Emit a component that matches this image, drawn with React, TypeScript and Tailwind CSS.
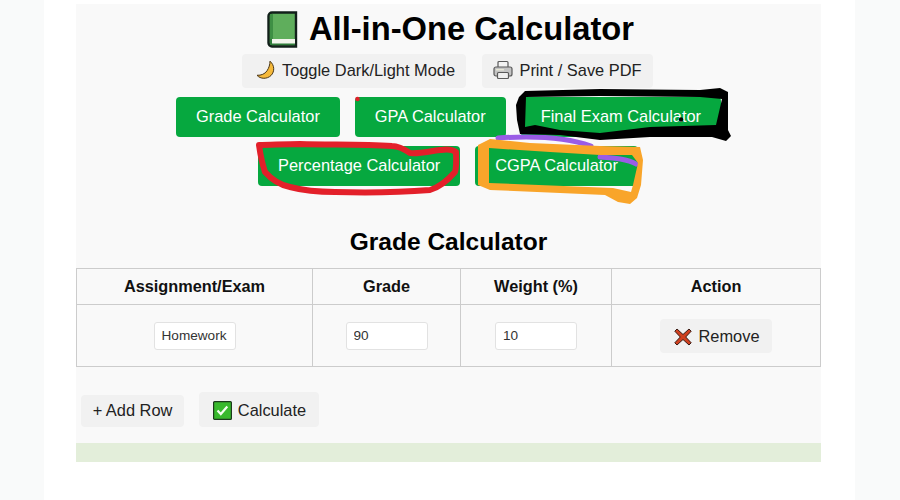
const font = { fontFamily: '"Liberation Sans", Arial, sans-serif' };

function Book() {
  return (
    <svg width="31" height="37" viewBox="0 0 31 37" className="shrink-0">
      <path d="M5 1.500H29V35.500H5A3.500 3.500 0 0 1 1.500 32V5A3.500 3.500 0 0 1 5 1.500z" fill="#5fae5c" stroke="#12201a" strokeWidth="2.400" />
      <rect x="3" y="3" width="3" height="25" fill="#3e8f44" />
      <rect x="3" y="28" width="25" height="6" fill="#2f7d3a" />
      <rect x="5" y="28" width="23" height="4.500" fill="#f2f5ec" />
    </svg>
  );
}

function Moon() {
  return (
    <svg width="20" height="20" viewBox="0 0 20 20" className="shrink-0">
      <path d="M14 1.200C18.500 5 19 11.500 15 15.500 11 19.300 4.500 19.200 1 15.300 5 15.500 9 14 11 10.800 13 7.800 14 4.500 14 1.200z" fill="#f5b93a" stroke="#4a3514" strokeWidth="1" />
    </svg>
  );
}

function Printer() {
  return (
    <svg width="20" height="20" viewBox="0 0 20 20" className="shrink-0">
      <path d="M5 8V2.500a1 1 0 0 1 1-1h8a1 1 0 0 1 1 1V8" fill="#f3f3f3" stroke="#5a5a5a" strokeWidth="1.200" />
      <rect x="1" y="7" width="18" height="9" rx="2" fill="#c4c4c4" stroke="#5a5a5a" strokeWidth="1.200" />
      <rect x="3" y="9" width="8" height="1.500" fill="#e6e6d6" />
      <rect x="4.500" y="12.500" width="11" height="6" rx="1" fill="#efefef" stroke="#5a5a5a" strokeWidth="1.200" />
    </svg>
  );
}

function Check() {
  return (
    <svg width="19" height="19" viewBox="0 0 19 19" className="shrink-0">
      <rect x="0.600" y="0.600" width="17.800" height="17.800" rx="1" fill="#38b92c" stroke="#1c3a1c" strokeWidth="1.200" />
      <path d="M4.500 9.500l3.300 3.500 6.500-7.500" fill="none" stroke="#f4fff0" strokeWidth="2.200" />
    </svg>
  );
}

function Cross() {
  return (
    <svg width="18" height="18" viewBox="0 0 18 18" className="shrink-0">
      <path d="M3 1l6 5.500L15 1l2.200 2.200-5.500 5.800 5.500 5.800L15 17l-6-5.500L3 17 .8 14.800 6.300 9 .8 3.200z" fill="#d0401f" stroke="#3a1a12" strokeWidth="1" />
    </svg>
  );
}

function Scribbles() {
  return (
    <svg width="900" height="500" viewBox="0 0 900 500" fill="none" strokeLinecap="round" strokeLinejoin="round" className="absolute left-0 top-0 pointer-events-none">
      <circle cx="357.500" cy="99" r="2.300" fill="#e0202a" />
      <path d="M498 138c30-2 65-2 93 8M600 157c14 1 28 2 36 7" stroke="#9a5ce6" strokeWidth="5" />
      <path fillRule="evenodd" fill="#000000" d="M519 97L525 91 600 89 700 90 720 88 728 92 728 130 731 136 726 141 712 137 650 137 600 140 560 135 520 134 517 120 516 105zM526 97L600 96 700 97 722 99 716 125 650 127 600 133 560 130 535 125 525 127z" />
      <circle cx="681" cy="119.500" r="2.200" fill="#000000" />
      <path d="M265 172C272 180 280 185 290 187 305 191 320 192 335 192 370 193 405 192 430 190 440 187 448 180 455 172 457 165 456 158 456 152 450 148 445 150 440 150 430 151 420 154 410 153 404 149 398 146 392 146 360 144 330 145 300 144 285 144 270 145 259 145 260 152 261 160 265 172z" stroke="#e3202a" strokeWidth="6" />
      <path fillRule="evenodd" fill="#f9a52a" d="M478 145L490 139 530 143 600 146 640 147 643 160 641 185 637 198 630 204 618 202 605 195 560 193 490 190 478 185zM489 148L550 152 600 155 632 155 638 163 633 185 631 192 613 188 489 183z" />
    </svg>
  );
}

export default function App() {
  return (
    <div style={font} className="relative flex h-[500px] w-[900px] overflow-hidden bg-[#f9fafa] text-[#111111]">
      <div className="w-[44px] shrink-0" />
      <div className="w-[811px] shrink-0 bg-white pl-[32px] pr-[34px] pt-[4px]">
        <div className="h-[458px] bg-[#f9f9f9]">
          <h1 className="flex h-[50px] items-center justify-center gap-[11px] pl-[4px] text-[32.7px] font-bold text-black">
            <Book />
            <span>All-in-One Calculator</span>
          </h1>
          <div className="flex justify-center gap-[16px] pr-[2px]">
            <button className="flex h-[34px] w-[224px] items-center justify-center gap-[6px] rounded bg-[#f1f1f1] pb-[2px] pl-[3px] text-[16.4px] text-[#222222]">
              <Moon />Toggle Dark/Light Mode
            </button>
            <button className="flex h-[34px] w-[171px] items-center justify-center gap-[6px] rounded bg-[#f1f1f1] pb-[2px] text-[16.4px] text-[#222222]">
              <Printer />Print / Save PDF
            </button>
          </div>
          <div className="mt-[9px] flex justify-center gap-[15px] text-[16.4px] text-white">
            <button className="h-[40px] rounded bg-[#06a83f] px-[20px] pb-[2px]">Grade Calculator</button>
            <button className="h-[40px] rounded bg-[#06a83f] px-[20px] pb-[2px]">GPA Calculator</button>
            <button className="h-[40px] rounded bg-[#06a83f] px-[20px] pb-[2px]">Final Exam Calculator</button>
          </div>
          <div className="mt-[9px] flex justify-center gap-[15px] pr-[1px] text-[16.4px] text-white">
            <button className="h-[40px] rounded bg-[#06a83f] px-[20px] pb-[2px]">Percentage Calculator</button>
            <button className="h-[40px] rounded bg-[#06a83f] px-[20px] pb-[2px]">CGPA Calculator</button>
          </div>
          <h2 className="mt-[42px] text-center text-[24.5px] font-bold leading-[28px] text-black">Grade Calculator</h2>
          <table className="mt-[12px] w-[745px] table-fixed border-collapse text-[16.3px]">
            <thead>
              <tr className="h-[36px]">
                <th className="w-[236px] border border-[#cccccc] font-bold">Assignment/Exam</th>
                <th className="w-[148px] border border-[#cccccc] font-bold">Grade</th>
                <th className="w-[151px] border border-[#cccccc] font-bold">Weight (%)</th>
                <th className="border border-[#cccccc] font-bold">Action</th>
              </tr>
            </thead>
            <tbody>
              <tr className="h-[62px]">
                <td className="border border-[#cccccc] text-center">
                  <input readOnly value="Homework" className="mx-auto block h-[28px] w-[82px] rounded-[3px] border border-[#e2e2e2] bg-white px-[7px] text-[13.600px] text-[#333333]" />
                </td>
                <td className="border border-[#cccccc] text-center">
                  <input readOnly value="90" className="mx-auto block h-[28px] w-[82px] rounded-[3px] border border-[#e2e2e2] bg-white px-[7px] text-[13.600px] text-[#333333]" />
                </td>
                <td className="border border-[#cccccc] text-center">
                  <input readOnly value="10" className="mx-auto block h-[28px] w-[82px] rounded-[3px] border border-[#e2e2e2] bg-white px-[7px] text-[13.600px] text-[#333333]" />
                </td>
                <td className="border border-[#cccccc] text-center">
                  <button className="mx-auto flex h-[34px] w-[112px] items-center justify-center gap-[6px] rounded bg-[#f1f1f1] pl-[2px] pt-[2px] text-[16.4px] text-[#222222]">
                    <Cross />Remove
                  </button>
                </td>
              </tr>
            </tbody>
          </table>
          <div className="mt-[25px] flex items-end gap-[15px] pl-[5px] text-[16.4px] text-[#222222]">
            <button className="h-[32px] w-[103px] rounded bg-[#f1f1f1] pb-[2px]">+ Add Row</button>
            <button className="flex h-[35px] w-[120px] items-center justify-center gap-[6px] rounded bg-[#f1f1f1] pl-[1px] pt-[2px]">
              <Check />Calculate
            </button>
          </div>
          <div className="mt-[16px] h-[19px] bg-[#e3eeda]" />
        </div>
      </div>
      <div className="w-[45px] shrink-0" />
      <Scribbles />
    </div>
  );
}
